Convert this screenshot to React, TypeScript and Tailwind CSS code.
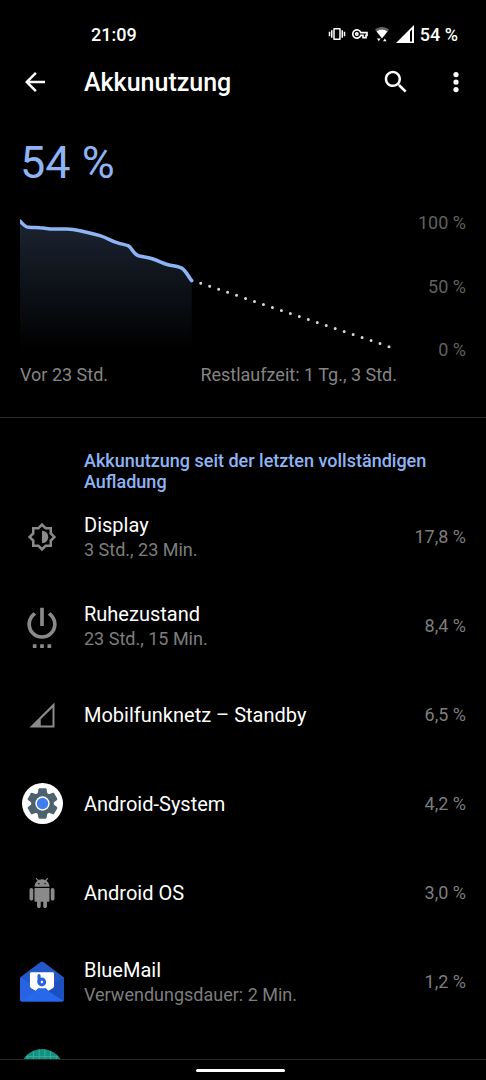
import React from 'react';

type IconProps = { className?: string };

interface UsageItem {
    id: string;
    name?: string;
    detail?: string;
    share?: string;
    icon: React.ReactNode;
}

const VibrateIcon = () => (
    <svg viewBox="0 0 24 24" className="size-[18px]" fill="currentColor" aria-hidden="true">
        <path d="M1 15h2V9H1v6zm3 2h2V7H4v10zm17-8v6h2V9h-2zm-3 8h2V7h-2v10zM15.500 4h-7C7.670 4 7 4.670 7 5.500v13c0 .83.67 1.500 1.500 1.500h7c.83 0 1.500-.67 1.500-1.500v-13c0-.83-.67-1.500-1.500-1.500zM15 18H9V6h6v12z" />
    </svg>
);

const KeyIcon = () => (
    <svg viewBox="0 0 24 24" className="size-4" fill="none" stroke="currentColor" strokeWidth="2.400" aria-hidden="true">
        <path d="M13.200 14a6.200 6.200 0 1 1 0-4H22.500v4H21v3.500h-4.500V14z" />
        <circle cx="7.200" cy="12" r="1.800" />
    </svg>
);

const WifiIcon = () => (
    <svg viewBox="0 0 16 18" className="h-[18px] w-4" fill="currentColor" aria-hidden="true">
        <path d="M1 4.500C5 1 11 1 15 4.500L13.500 6.500C10 3.800 6 3.800 2.500 6.500z" opacity=".4" />
        <path d="M2.500 6.500c3.500-2.700 7.500-2.700 11 0L8 13.500z" />
        <path d="M3 13.500h3.600L4.800 16.300zM9 16.300h3.600L10.800 13.500z" />
    </svg>
);

const SignalIcon = () => (
    <svg viewBox="0 0 18 18" className="size-[18px]" aria-hidden="true">
        <path d="M0 18L18 0v18z" fill="currentColor" />
        <path d="M14 6.500v10h2v-12z" fill="#000" />
    </svg>
);

const BackIcon = ({ className }: IconProps) => (
    <svg viewBox="0 0 24 24" className={className} fill="currentColor" aria-hidden="true">
        <path d="M20 11H7.830l5.590-5.590L12 4l-8 8 8 8 1.410-1.410L7.830 13H20v-2z" />
    </svg>
);

const SearchIcon = ({ className }: IconProps) => (
    <svg viewBox="0 0 24 24" className={className} fill="currentColor" aria-hidden="true">
        <path d="M15.500 14h-.79l-.28-.27C15.410 12.590 16 11.110 16 9.500 16 5.910 13.090 3 9.500 3S3 5.910 3 9.500 5.910 16 9.500 16c1.610 0 3.090-.59 4.230-1.570l.27.28v.79l5 4.990L20.490 19l-4.990-5zm-6 0C7.010 14 5 11.990 5 9.500S7.010 5 9.500 5 14 7.010 14 9.500 11.990 14 9.500 14z" />
    </svg>
);

const MoreIcon = ({ className }: IconProps) => (
    <svg viewBox="0 0 24 24" className={className} fill="currentColor" aria-hidden="true">
        <circle cx="12" cy="6" r="2.100" />
        <circle cx="12" cy="12" r="2.100" />
        <circle cx="12" cy="18" r="2.100" />
    </svg>
);

const BrightnessIcon = () => (
    <svg viewBox="0 0 24 24" className="size-[30px]" fill="currentColor" aria-hidden="true">
        <path d="M20 8.690V4h-4.690L12 .69 8.690 4H4v4.690L.69 12 4 15.310V20h4.690L12 23.310 15.310 20H20v-4.690L23.310 12 20 8.690zm-2 5.790V18h-3.520L12 20.480 9.520 18H6v-3.520L3.520 12 6 9.520V6h3.520L12 3.520 14.480 6H18v3.520L20.480 12 18 14.480z" />
        <path d="M12 7v10c2.760 0 5-2.240 5-5s-2.240-5-5-5z" />
    </svg>
);

const PowerIcon = () => (
    <svg viewBox="0 0 24 24" className="size-11" fill="currentColor" aria-hidden="true">
        <path d="M7 24h2v-2H7v2zm4 0h2v-2h-2v2zm2-22h-2v10h2V2zm3.560 2.440l-1.450 1.450C16.840 6.940 18 8.830 18 11c0 3.310-2.690 6-6 6s-6-2.690-6-6c0-2.170 1.160-4.060 2.880-5.120L7.440 4.440C5.360 5.880 4 8.280 4 11c0 4.420 3.580 8 8 8s8-3.580 8-8c0-2.720-1.360-5.120-3.440-6.560zM15 24h2v-2h-2v2z" />
    </svg>
);

const CellIcon = () => (
    <svg viewBox="0 0 24 24" className="size-[30px]" fill="currentColor" aria-hidden="true">
        <path d="M2 22h20V2L2 22zm18.400-1.600H11v-5l9.400-9.200v14.200z" />
    </svg>
);

const SystemIcon = () => (
    <svg viewBox="0 0 40 40" className="size-[41px]" aria-hidden="true">
        <circle cx="20" cy="20" r="20" fill="#fff" />
        <g fill="#4d626d">
            <circle cx="20" cy="20" r="11" />
            {[0, 60, 120, 180, 240, 300].map((angle) => (
                <path key={angle} d="M15 12l1-6q.2-.8 1-.8h6q.8 0 1 .8l1 6z" transform={`rotate(${angle} 20 20)`} />
            ))}
        </g>
        <circle cx="20" cy="20" r="7" fill="#fff" />
        <circle cx="20" cy="20" r="5.600" fill="#3f7df0" />
    </svg>
);

const RobotIcon = () => (
    <svg viewBox="0 0 24 24" className="size-[30px]" fill="currentColor" aria-hidden="true">
        <path d="M6 18c0 .55.45 1 1 1h1v3.500c0 .83.67 1.500 1.500 1.500s1.500-.67 1.500-1.500V19h2v3.500c0 .83.67 1.500 1.500 1.500s1.500-.67 1.500-1.500V19h1c.55 0 1-.45 1-1V8H6v10zM3.500 8C2.670 8 2 8.670 2 9.500v7c0 .83.67 1.500 1.500 1.500S5 17.330 5 16.500v-7C5 8.670 4.330 8 3.500 8zm17 0c-.83 0-1.500.67-1.500 1.500v7c0 .83.67 1.500 1.500 1.500s1.500-.67 1.500-1.500v-7c0-.83-.67-1.500-1.500-1.500zm-4.970-5.840l1.300-1.300c.2-.2.2-.51 0-.71-.2-.2-.51-.2-.71 0l-1.480 1.480C13.850 1.230 12.950 1 12 1c-.96 0-1.860.23-2.660.63L7.850.15c-.2-.2-.51-.2-.71 0-.2.2-.2.51 0 .71l1.310 1.310C6.970 3.260 6 5.010 6 7h12c0-1.990-.97-3.750-2.470-4.840zM10 5H9V4h1v1zm5 0h-1V4h1v1z" />
    </svg>
);

const MailIcon = () => (
    <svg viewBox="0 0 45 42" className="h-[42px] w-[45px]" aria-hidden="true">
        <path d="M0 16.500L20 1.200q2.500-1.800 5 0L45 16.500V39q0 2-2 2H2q-2 0-2-2z" fill="#2458c8" />
        <path d="M0 16.500V39q0 1 .6 1.500L20 28z" fill="#2763e0" />
        <path d="M45 16.500V39q0 1-.6 1.500L25 28z" fill="#1c4fc0" />
        <path d="M.6 40.500L22.500 26l21.900 14.500q-.6.5-1.400.5H2q-.8 0-1.400-.5z" fill="#2669ec" />
        <path d="M11.500 11h22q1.300 0 1.300 1.300V25q0 1.500-1.300 2.300L29 30l-2.600-2.500h-7.800L16 30l-4.500-2.700Q10.200 26.500 10.200 25V12.300Q10.200 11 11.500 11z" fill="#fff" />
        <path d="M19.500 14.500V21" stroke="#2763e0" strokeWidth="3.200" strokeLinecap="round" />
        <circle cx="22.300" cy="21" r="2.900" fill="none" stroke="#2763e0" strokeWidth="3.200" />
    </svg>
);

const GridIcon = () => (
    <svg viewBox="0 0 46 46" className="size-[46px]" aria-hidden="true">
        <circle cx="23" cy="23" r="23" fill="#0f9280" />
        <path d="M8 6v34M14 2v42M20 0v46M26 0v46M32 2v42M38 6v34M6 8h34M2 14h42M0 20h46M0 26h46M2 32h42M6 38h34" stroke="#5cc0b0" strokeWidth="1" opacity=".6" />
    </svg>
);

const usage: UsageItem[] = [
    { id: 'display', name: 'Display', detail: '3 Std., 23 Min.', share: '17,8 %', icon: <BrightnessIcon /> },
    { id: 'idle', name: 'Ruhezustand', detail: '23 Std., 15 Min.', share: '8,4 %', icon: <PowerIcon /> },
    { id: 'cell', name: 'Mobilfunknetz – Standby', share: '6,5 %', icon: <CellIcon /> },
    { id: 'system', name: 'Android-System', share: '4,2 %', icon: <SystemIcon /> },
    { id: 'os', name: 'Android OS', share: '3,0 %', icon: <RobotIcon /> },
    { id: 'mail', name: 'BlueMail', detail: 'Verwendungsdauer: 2 Min.', share: '1,2 %', icon: <MailIcon /> },
    { id: 'app', icon: <GridIcon /> },
];

const levelPath =
    'M0 8C3 11 5 14.300 9 14.300C13 14.700 16 14.400 20 14.700C26 15 28 16 33 16C39 16 42 15.800 47 16C52 16.200 55 16.700 60 17.700C68 19.700 73 20.500 80 22.700C86 24.500 91 27.700 97 29.700C101 31 105 31.500 108 32.700C112 34.500 113 40.500 118 42.700C122 44 128 44.300 133 46C139 48 142 50.200 148 51.700C153 53 158 53 162 55.300C166 58 168 63 171.700 67.700';

const BatteryChart = () => (
    <svg viewBox="0 0 377 147" preserveAspectRatio="none" className="h-[147px] min-w-0 flex-1" role="img" aria-label="Akkustand">
        <defs>
            <linearGradient id="level" x1="0" y1="0" x2="0" y2="1">
                <stop offset="0" stopColor="#8ab4f8" stopOpacity=".2" />
                <stop offset="1" stopColor="#8ab4f8" stopOpacity="0" />
            </linearGradient>
        </defs>
        <path d={`${levelPath}V137H0z`} fill="url(#level)" />
        <path d={levelPath} fill="none" stroke="#8fb4f5" strokeWidth="3.500" strokeLinecap="round" />
        <path d="M180.700 70.300L369.200 133.700" fill="none" stroke="#d5d7da" strokeWidth="3" strokeLinecap="round" strokeDasharray="0 9.460" />
    </svg>
);

const UsageRow = ({ item }: { item: UsageItem }) => (
    <li className="flex h-[89px] items-center px-5">
        <span className="flex w-11 shrink-0 justify-center text-[#8a8a8a]">{item.icon}</span>
        {item.name && (
            <>
                <div className="ml-5 min-w-0 flex-1 pt-px">
                    <p className="text-[20px] leading-[26px] text-white">{item.name}</p>
                    {item.detail && <p className="text-[18px] leading-6 text-[#7d7d7d]">{item.detail}</p>}
                </div>
                <span className="text-[18px] text-[#7d7d7d]">{item.share}</span>
            </>
        )}
    </li>
);

const App = () => {
    return (
        <div className="flex h-screen flex-col bg-black font-[Roboto,sans-serif] text-white">
            <div className="flex h-[52px] shrink-0 items-center justify-between pt-4 pr-7 pl-[91px] text-[18px] font-medium">
                <span>21:09</span>
                <div className="flex items-center gap-1.5">
                    <VibrateIcon />
                    <KeyIcon />
                    <WifiIcon />
                    <SignalIcon />
                    <span>54 %</span>
                </div>
            </div>

            <header className="flex h-[60px] shrink-0 items-center pr-[15px] pl-5">
                <button type="button" aria-label="Zurück">
                    <BackIcon className="size-[30px]" />
                </button>
                <h1 className="ml-[34px] flex-1 pt-0.5 text-[25px] font-medium">Akkunutzung</h1>
                <button type="button" aria-label="Suchen">
                    <SearchIcon className="size-[30px]" />
                </button>
                <button type="button" aria-label="Weitere Optionen" className="ml-[30px]">
                    <MoreIcon className="size-[30px]" />
                </button>
            </header>

            <main className="min-h-0 flex-1 overflow-y-auto [scrollbar-width:none]">
                <section className="border-b border-[#2a2a2a] px-5 pt-[25px] pb-8">
                    <p className="text-[45px] leading-[52px] text-[#8fb4f5]">54 %</p>
                    <div className="mt-6 flex">
                        <BatteryChart />
                        <div className="flex w-[69px] flex-col justify-between text-right text-[18px] leading-5 text-[#606060]">
                            <span>100 %</span>
                            <span>50 %</span>
                            <span>0 %</span>
                        </div>
                    </div>
                    <div className="mt-1 mr-[69px] flex justify-between text-[18px] leading-[21px] text-[#858585]">
                        <span>Vor 23 Std.</span>
                        <span>Restlaufzeit: 1 Tg., 3 Std.</span>
                    </div>
                </section>

                <section>
                    <h2 className="pt-8 pr-5 pl-[84px] text-[18px] leading-[21px] font-medium text-[#8fb4f5]">
                        Akkunutzung seit der letzten vollständigen Aufladung
                    </h2>
                    <ul>
                        {usage.map((item) => (
                            <UsageRow key={item.id} item={item} />
                        ))}
                    </ul>
                </section>
            </main>

            <footer className="flex h-[21px] shrink-0 items-center justify-center border-t border-[#2a2a2a] pr-1.5">
                <span className="h-[3px] w-[89px] rounded-full bg-white" />
            </footer>
        </div>
    );
};

export default App;
